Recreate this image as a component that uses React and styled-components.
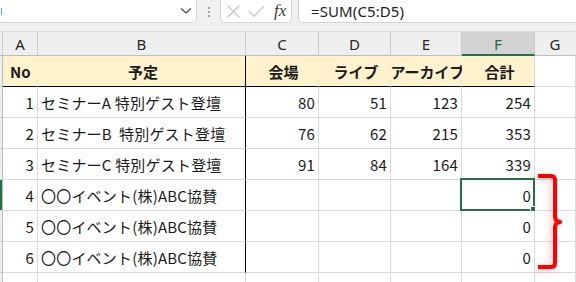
import React from "react";
import styled, { createGlobalStyle } from "styled-components";

const Global = createGlobalStyle`
  html, body { margin: 0; padding: 0; background: #ffffff; overflow: hidden; }
  body { font-family: "Noto Sans CJK JP", "Noto Sans", sans-serif; }
`;

const Page = styled.div`
  position: relative;
  width: 576px;
  height: 282px;
  overflow: hidden;
  background: #ffffff;
`;

const FormulaBar = styled.div`
  height: 31px;
  background: #f0f0f0;
  display: flex;
  align-items: flex-start;
  box-sizing: border-box;
`;

const NameBox = styled.div`
  position: relative;
  width: 201px;
  height: 23px;
  margin-left: -4px;
  box-sizing: border-box;
  background: #ffffff;
  border: 1px solid #d4d4d4;
  border-top: none;
  border-radius: 0 0 5px 5px;
  display: flex;
  align-items: center;
  justify-content: flex-end;
  padding-right: 4px;
`;

const Caret = styled.span`
  position: absolute;
  left: 4px;
  top: 8px;
  width: 1px;
  height: 7px;
  background: #3fc1e8;
`;

const Dots = styled.div`
  width: 23px;
  height: 23px;
  display: flex;
  flex-direction: column;
  align-items: center;
  justify-content: center;
  gap: 2px;
`;

const Dot = styled.span`
  width: 2px;
  height: 2px;
  border-radius: 1px;
  background: #8a8a8a;
`;

const FxBox = styled.div`
  width: 72px;
  height: 23px;
  box-sizing: border-box;
  background: #ffffff;
  border: 1px solid #d4d4d4;
  border-top: none;
  border-radius: 0 0 5px 5px;
  display: flex;
  align-items: center;
  padding-left: 5px;
  gap: 7px;
`;

const FxLabel = styled.span`
  font-family: "Liberation Serif", "DejaVu Serif", serif;
  font-style: italic;
  font-size: 17px;
  color: #3a3a3a;
  margin-left: 2px;
  line-height: 1;
  margin-top: -2px;
`;

const InputBox = styled.div`
  flex: 1;
  height: 23px;
  margin-left: 6px;
  margin-right: -10px;
  box-sizing: border-box;
  background: #ffffff;
  border: 1px solid #d4d4d4;
  border-top: none;
  border-radius: 0 0 5px 5px;
  display: flex;
  align-items: center;
  padding-left: 12px;
  font-family: "Noto Sans", "Liberation Sans", sans-serif;
  font-size: 15px;
  color: #222;
  letter-spacing: 0.1px;
`;

const Sheet = styled.div`
  display: grid;
  grid-template-columns: 3px 35px 208px 73px 72px 71px 73px 1fr;
  grid-template-rows: 25px repeat(8, 31px);
`;

const ColHead = styled.div`
  box-sizing: border-box;
  background: ${(p) => (p.$selected ? "#d3d3d3" : "#efefef")};
  border-right: 1px solid ${(p) => (p.$last ? "transparent" : "#c9c9c9")};
  border-bottom: ${(p) => (p.$selected ? "2px solid #217346" : "1px solid #bdbdbd")};
  border-top: 1px solid #dcdcdc;
  color: ${(p) => (p.$selected ? "#1d6b3f" : "#262626")};
  font-family: "Noto Sans", "Liberation Sans", sans-serif;
  font-size: 15px;
  display: flex;
  align-items: center;
  justify-content: center;
  padding-top: 1px;
`;

const RowHead = styled.div`
  box-sizing: border-box;
  background: ${(p) => (p.$selected ? "#217346" : "#efefef")};
  border-right: 1px solid #bdbdbd;
  border-bottom: 1px solid #cfcfcf;
`;

const Cell = styled.div`
  position: relative;
  box-sizing: border-box;
  background: ${(p) => p.$bg || "#ffffff"};
  border-right: 1px solid ${(p) => p.$right || "#dadada"};
  border-bottom: 1px solid ${(p) => p.$bottom || "#dadada"};
  display: flex;
  align-items: center;
  justify-content: ${(p) =>
    p.$align === "right" ? "flex-end" : p.$align === "center" ? "center" : "flex-start"};
  padding: ${(p) => (p.$align === "right" ? "0 3px 0 0" : p.$pad ? `0 0 0 ${p.$pad}px` : "0 0 0 3px")};
  font-family: "Noto Sans CJK JP", "Noto Sans", sans-serif;
  font-size: 15px;
  font-weight: ${(p) => (p.$bold ? 700 : 400)};
  letter-spacing: ${(p) => (p.$bold ? "0" : "0.2px")};
  color: #1a1a1a;
  white-space: pre;
`;

const Selection = styled.div`
  position: absolute;
  left: -2px;
  top: -2px;
  right: -1px;
  bottom: -1px;
  border: 2px solid #217346;
  pointer-events: none;
`;

const Handle = styled.span`
  position: absolute;
  right: -4px;
  bottom: -4px;
  width: 6px;
  height: 6px;
  background: #217346;
  box-shadow: 0 0 0 1px #ffffff;
`;

const Brace = styled.svg`
  position: absolute;
  left: 532px;
  top: 169px;
  overflow: visible;
  filter: drop-shadow(-3px 2px 3px rgba(255, 60, 60, 0.3));
`;

const YELLOW = "#fff2cc";
const BLACK = "#000000";

const rows = [
  { no: 1, name: "セミナーA 特別ゲスト登壇", c: 80, d: 51, e: 123, f: 254 },
  { no: 2, name: "セミナーB  特別ゲスト登壇", c: 76, d: 62, e: 215, f: 353 },
  { no: 3, name: "セミナーC 特別ゲスト登壇", c: 91, d: 84, e: 164, f: 339 },
  { no: 4, name: "〇〇イベント(株)ABC協賛", c: "", d: "", e: "", f: 0 },
  { no: 5, name: "〇〇イベント(株)ABC協賛", c: "", d: "", e: "", f: 0 },
  { no: 6, name: "〇〇イベント(株)ABC協賛", c: "", d: "", e: "", f: 0 },
];

export default function App() {
  return (
    <Page>
      <Global />
      <FormulaBar>
        <NameBox>
          <Caret />
          <svg width="12" height="8" viewBox="0 0 12 8">
            <path d="M1 1.5 L6 6 L11 1.5" fill="none" stroke="#444" strokeWidth="1.2" />
          </svg>
        </NameBox>
        <Dots>
          <Dot />
          <Dot />
          <Dot />
        </Dots>
        <FxBox>
          <svg width="15" height="15" viewBox="0 0 15 15">
            <path d="M1.5 1.5 L13.5 13.5 M13.5 1.5 L1.5 13.5" stroke="#c4c4c4" strokeWidth="1.1" fill="none" />
          </svg>
          <svg width="17" height="13" viewBox="0 0 17 13">
            <path d="M1 6.5 L6 11.5 L16 1" stroke="#c4c4c4" strokeWidth="1.1" fill="none" />
          </svg>
          <FxLabel>fx</FxLabel>
        </FxBox>
        <InputBox>=SUM(C5:D5)</InputBox>
      </FormulaBar>

      <Sheet>
        <ColHead />
        <ColHead>A</ColHead>
        <ColHead>B</ColHead>
        <ColHead>C</ColHead>
        <ColHead>D</ColHead>
        <ColHead>E</ColHead>
        <ColHead $selected>F</ColHead>
        <ColHead $last>G</ColHead>

        <RowHead />
        <Cell $bg={YELLOW} $right={YELLOW} $bottom={BLACK} $bold $pad={7}>No</Cell>
        <Cell $bg={YELLOW} $right={BLACK} $bottom={BLACK} $bold $align="center">予定</Cell>
        <Cell $bg={YELLOW} $right={YELLOW} $bottom={BLACK} $bold $align="center">会場</Cell>
        <Cell $bg={YELLOW} $right={YELLOW} $bottom={BLACK} $bold $align="center">ライブ</Cell>
        <Cell $bg={YELLOW} $right={YELLOW} $bottom={BLACK} $bold $align="center">アーカイブ</Cell>
        <Cell $bg={YELLOW} $right="#dadada" $bottom={BLACK} $bold $align="center">合計</Cell>
        <Cell />

        {rows.map((r) => (
          <React.Fragment key={r.no}>
            <RowHead $selected={r.no === 4} />
            <Cell $align="right">{r.no}</Cell>
            <Cell $right={BLACK}>{r.name}</Cell>
            <Cell $align="right">{r.c}</Cell>
            <Cell $align="right">{r.d}</Cell>
            <Cell $align="right">{r.e}</Cell>
            <Cell $align="right">
              {r.f}
              {r.no === 4 && (
                <Selection>
                  <Handle />
                </Selection>
              )}
            </Cell>
            <Cell />
          </React.Fragment>
        ))}

        <RowHead />
        <Cell />
        <Cell />
        <Cell />
        <Cell />
        <Cell />
        <Cell />
        <Cell />
      </Sheet>

      <Brace width="32" height="104" viewBox="0 0 32 104">
        <path
          d="M6 7 H19 Q23 7 23 11 V48 Q23 52 28 53 Q23 54 23 58 V94 Q23 98 19 98 H6"
          fill="none"
          stroke="#ff0000"
          strokeWidth="4"
          strokeLinejoin="round"
        />
      </Brace>
    </Page>
  );
}
